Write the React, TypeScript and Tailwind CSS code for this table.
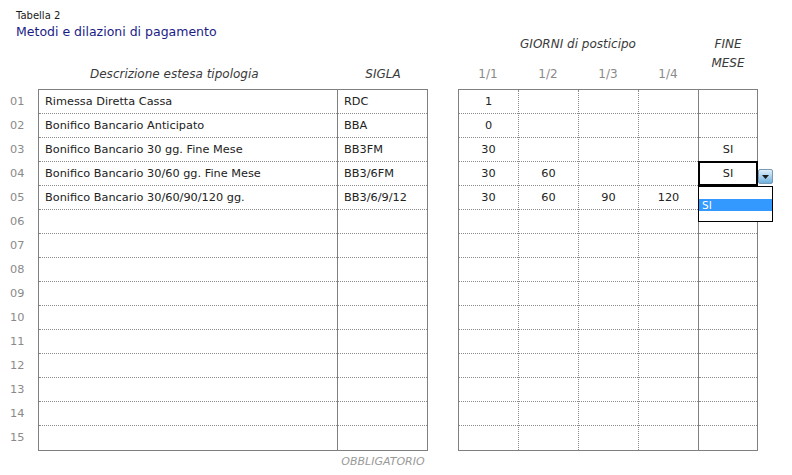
import React from "react";

type Row = { desc: string; sigla: string; days: string[]; fine: string };

const filled: Row[] = [
  { desc: "Rimessa Diretta Cassa", sigla: "RDC", days: ["1"], fine: "" },
  { desc: "Bonifico Bancario Anticipato", sigla: "BBA", days: ["0"], fine: "" },
  { desc: "Bonifico Bancario 30 gg. Fine Mese", sigla: "BB3FM", days: ["30"], fine: "SI" },
  { desc: "Bonifico Bancario 30/60 gg. Fine Mese", sigla: "BB3/6FM", days: ["30", "60"], fine: "SI" },
  { desc: "Bonifico Bancario 30/60/90/120 gg.", sigla: "BB3/6/9/12", days: ["30", "60", "90", "120"], fine: "" },
];

const rows: Row[] = Array.from({ length: 15 }, (_, i) => filled[i] ?? { desc: "", sigla: "", days: [], fine: "" });

const cell = "h-6 border-b border-dotted border-[#8a8a8a] last:border-b-0 leading-[23px] whitespace-nowrap";

const DropButton = () => (
  <svg width="15" height="15" viewBox="0 0 15 15">
    <defs>
      <linearGradient id="btn" x1="0" y1="0" x2="0" y2="1">
        <stop offset="0" stopColor="#e4f1fa" />
        <stop offset="0.5" stopColor="#a9d2ee" />
        <stop offset="1" stopColor="#6aaedc" />
      </linearGradient>
    </defs>
    <rect x="0.5" y="0.5" width="14" height="14" rx="1.5" fill="url(#btn)" stroke="#7b9bb5" />
    <path d="M4 6h7l-3.5 4z" fill="#1c1c1c" />
  </svg>
);

const FineCell = ({ value, selected }: { value: string; selected: boolean }) => {
  if (!selected) return <div className={cell + " text-center"}>{value}</div>;
  return (
    <div className={cell + " relative text-center"}>
      {value}
      <div className="absolute inset-[-1px] border-2 border-black pointer-events-none" />
      <div className="absolute left-[59px] top-[7px] z-10 leading-none">
        <DropButton />
      </div>
      <div className="absolute left-[-1px] top-[24px] z-10 flex h-[36px] w-[75px] flex-col border border-black bg-white">
        <div className="h-[12px]" />
        <div className="h-[12px] bg-[#3399ff] pl-[3px] text-left text-[10.5px] leading-[12px] text-white">SI</div>
      </div>
    </div>
  );
};

export default function App() {
  return (
    <div className="h-[475px] w-[792px] overflow-hidden bg-white font-['DejaVu_Sans',Verdana,sans-serif] text-[11.3px] text-[#222]">
      <div className="flex">
        {/* left part: titles, descrizione + sigla */}
        <div className="w-[428px] shrink-0">
          <div className="h-[41px] pl-4 pt-[9px]">
            <div className="text-[10px] leading-[14px] text-[#1a1a1a]">Tabella 2</div>
            <div className="text-[12.5px] leading-[18px] text-[#1b1b86]">Metodi e dilazioni di pagamento</div>
          </div>
          <div className="flex h-[48px] items-end pb-[7px] text-[12px] italic leading-[16px] text-[#3a3a3a]">
            <div className="w-[338px] pl-[90px]">Descrizione estesa tipologia</div>
            <div className="w-[90px] text-center">SIGLA</div>
          </div>
          <div className="flex">
            <div className="w-[38px] shrink-0 pt-px text-[#8a8a8a]">
              {rows.map((_, i) => (
                <div key={i} className="h-6 pl-[10px] leading-[23px]">
                  {String(i + 1).padStart(2, "0")}
                </div>
              ))}
            </div>
            <div className="flex w-[390px] border border-[#808080]">
              <div className="w-[299px] border-r border-[#808080]">
                {rows.map((r, i) => (
                  <div key={i} className={cell + " pl-[6px]"}>{r.desc}</div>
                ))}
              </div>
              <div className="flex-1">
                {rows.map((r, i) => (
                  <div key={i} className={cell + " pl-[6px]"}>{r.sigla}</div>
                ))}
              </div>
            </div>
          </div>
          <div className="ml-[338px] mt-[3px] w-[90px] text-center text-[11px] italic leading-[16px] text-[#999]">
            OBBLIGATORIO
          </div>
        </div>

        {/* right part: giorni di posticipo + fine mese */}
        <div className="ml-[30px] w-[300px] shrink-0">
          <div className="flex h-[89px] text-[12px] italic">
            <div className="w-[240px]">
              <div className="pt-[35px] text-center leading-[18px] text-[#3a3a3a]">GIORNI di posticipo</div>
              <div className="mt-[13px] flex leading-[16px] not-italic text-[#8a8a8a]">
                {["1/1", "1/2", "1/3", "1/4"].map((t) => (
                  <div key={t} className="w-[60px] text-center">{t}</div>
                ))}
              </div>
            </div>
            <div className="w-[60px] pt-[35px] text-center leading-[19px] text-[#3a3a3a]">
              FINE
              <br />
              MESE
            </div>
          </div>
          <div className="flex w-[300px] border border-[#808080] text-[#222]">
            {[0, 1, 2, 3].map((c) => (
              <div
                key={c}
                className={
                  c === 3
                    ? "w-[60px] border-r border-solid border-[#808080]"
                    : "w-[60px] border-r border-dotted border-[#8a8a8a]"
                }
              >
                {rows.map((r, i) => (
                  <div key={i} className={cell + " text-center"}>{r.days[c] ?? ""}</div>
                ))}
              </div>
            ))}
            <div className="w-[58px]">
              {rows.map((r, i) => (
                <FineCell key={i} value={r.fine} selected={i === 3} />
              ))}
            </div>
          </div>
        </div>
      </div>
    </div>
  );
}
